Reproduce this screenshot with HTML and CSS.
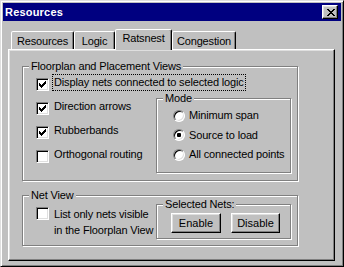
FILE: index.html
```html
<!DOCTYPE html>
<html>
<head>
<meta charset="utf-8">
<title>Resources</title>
<link rel="stylesheet" href="styles.css">
</head>
<body>
<div class="window">
  <div class="titlebar">
    <span class="title">Resources</span>
    <span class="close"><svg width="8" height="7" viewBox="0 0 8 7" shape-rendering="crispEdges"><path d="M0 0h2v1H0zM6 0h2v1H6zM1 1h2v1H1zM5 1h2v1H5zM2 2h4v1H2zM3 3h2v1H3zM2 4h4v1H2zM1 5h2v1H1zM5 5h2v1H5zM0 6h2v1H0zM6 6h2v1H6z" fill="#000"/></svg></span>
  </div>
  <div class="client">
    <div class="tabs">
      <div class="tab t-res">Resources</div>
      <div class="tab t-logic">Logic</div>
      <div class="tab t-rats active">Ratsnest</div>
      <div class="tab t-cong">Congestion</div>
    </div>
    <div class="panel">
      <div class="group g-views">
        <div class="group-title">Floorplan and Placement Views</div>
        <div class="row first">
          <span class="check"><svg width="7" height="7" viewBox="0 0 7 7" shape-rendering="crispEdges"><path d="M0 2h1v3H0zM1 3h1v3H1zM2 4h1v3H2zM3 3h1v3H3zM4 2h1v3H4zM5 1h1v3H5zM6 0h1v3H6z" fill="#000"/></svg></span>
          <span class="label focus">Display nets connected to selected logic</span>
        </div>
        <div class="split">
          <div class="col">
            <div class="row">
              <span class="check"><svg width="7" height="7" viewBox="0 0 7 7" shape-rendering="crispEdges"><path d="M0 2h1v3H0zM1 3h1v3H1zM2 4h1v3H2zM3 3h1v3H3zM4 2h1v3H4zM5 1h1v3H5zM6 0h1v3H6z" fill="#000"/></svg></span>
              <span class="label">Direction arrows</span>
            </div>
            <div class="row">
              <span class="check"><svg width="7" height="7" viewBox="0 0 7 7" shape-rendering="crispEdges"><path d="M0 2h1v3H0zM1 3h1v3H1zM2 4h1v3H2zM3 3h1v3H3zM4 2h1v3H4zM5 1h1v3H5zM6 0h1v3H6z" fill="#000"/></svg></span>
              <span class="label">Rubberbands</span>
            </div>
            <div class="row">
              <span class="check"></span>
              <span class="label">Orthogonal routing</span>
            </div>
          </div>
          <div class="group g-mode">
            <div class="group-title">Mode</div>
            <div class="radios">
              <div class="rrow"><span class="radio"></span><span class="rlabel">Minimum span</span></div>
              <div class="rrow"><span class="radio"><span class="dot"></span></span><span class="rlabel">Source to load</span></div>
              <div class="rrow"><span class="radio"></span><span class="rlabel">All connected points</span></div>
            </div>
          </div>
        </div>
      </div>
      <div class="group g-net">
        <div class="group-title">Net View</div>
        <div class="net">
          <div class="col">
            <div class="row multi">
              <span class="check"></span>
              <span class="label">List only nets visible<br>in the Floorplan View</span>
            </div>
          </div>
          <div class="group g-sel">
            <div class="group-title">Selected Nets:</div>
            <div class="buttons">
              <button class="btn b-enable">Enable</button>
              <button class="btn b-disable">Disable</button>
            </div>
          </div>
        </div>
      </div>
    </div>
  </div>
</div>
</body>
</html>
```
FILE: styles.css
```css
* { box-sizing: border-box; }
html, body { margin: 0; padding: 0; }
body {
  width: 344px;
  height: 267px;
  overflow: hidden;
  background: #c0c0c0;
  color: #000;
  font: 11px/15px "Liberation Sans", Arial, sans-serif;
  letter-spacing: -0.15px;
}
.window {
  width: 344px;
  height: 267px;
  padding: 2px;
  background: #c0c0c0;
  border: 1px solid;
  border-color: #dfdfdf #000 #000 #dfdfdf;
  box-shadow: inset 1px 1px #fff, inset -1px -1px #808080;
}
.titlebar {
  height: 18px;
  display: flex;
  align-items: flex-start;
  padding-left: 2px;
  background: #000080;
  color: #fff;
}
.title {
  font-weight: bold;
  line-height: 18px;
  letter-spacing: 0.2px;
}
.close {
  width: 16px;
  height: 14px;
  margin: 2px 3px 0 auto;
  padding: 3px 0 0 4px;
  display: flex;
  align-items: flex-start;
  background: #c0c0c0;
  border: 1px solid;
  border-color: #fff #000 #000 #fff;
  box-shadow: inset -1px -1px #808080, inset 1px 1px #dfdfdf;
}
.close svg { display: block; }
.client { padding: 8px 0 0 5px; }
.tabs {
  display: flex;
  align-items: flex-end;
  height: 20px;
  padding-left: 3px;
}
.tab {
  height: 18px;
  padding-top: 2px;
  text-align: center;
  line-height: 15px;
  white-space: nowrap;
  border: 1px solid;
  border-bottom: none;
  border-color: #fff #000 transparent #fff;
  border-radius: 2px 2px 0 0;
  box-shadow: inset -1px 0 #808080;
  background: #c0c0c0;
}
.tab.active {
  height: 21px;
  margin-bottom: -1px;
  padding-top: 1px;
  position: relative;
  z-index: 1;
}
.t-res { width: 63px; }
.t-logic { width: 41px; }
.t-rats { width: 57px; }
.t-cong { width: 64px; }
.panel {
  width: 327px;
  height: 212px;
  padding: 16px 0 0 13px;
  border: 1px solid;
  border-color: #fff #000 #000 #fff;
  box-shadow: inset -1px -1px #808080, inset 1px 1px #dfdfdf;
}
.group {
  border: 1px solid #808080;
  box-shadow: 1px 1px #fff, inset 1px 1px #fff;
}
.group-title {
  width: max-content;
  margin: -7px 0 0 6px;
  padding: 0 2px;
  line-height: 13px;
  background: #c0c0c0;
  white-space: nowrap;
}
.g-views { width: 276px; padding-bottom: 7px; }
.row {
  display: flex;
  align-items: flex-start;
  height: 24px;
  padding-left: 13px;
}
.row.first { margin-top: -1px; }
.check {
  flex: none;
  width: 13px;
  height: 13px;
  margin-top: 6px;
  padding: 2px;
  background: #fff;
  border: 1px solid;
  border-color: #808080 #fff #fff #808080;
  box-shadow: inset 1px 1px #000, inset -1px -1px #dfdfdf;
}
.check svg { display: block; }
.label {
  margin: 2px 0 0 3px;
  padding: 0 1px;
  line-height: 15px;
  white-space: nowrap;
  border: 1px dotted transparent;
}
.label.focus { border-color: #000; }
.split { display: flex; }
.col { width: 133px; flex: none; }
.g-mode {
  width: 135px;
  height: 75px;
  margin-top: 2px;
}
.radios { padding: 1px 0 0 16px; }
.rrow {
  display: flex;
  align-items: center;
  height: 19.5px;
  white-space: nowrap;
}
.radio {
  flex: none;
  width: 12px;
  height: 12px;
  margin-right: 4px;
  display: flex;
  align-items: center;
  justify-content: center;
  background: #fff;
  border: 1px solid;
  border-color: #808080 #fff #fff #808080;
  border-radius: 50%;
  box-shadow: inset 1px 1px #000, inset -1px -1px #dfdfdf;
}
.dot {
  width: 4px;
  height: 4px;
  border-radius: 1px;
  background: #000;
}
.rlabel { line-height: 15px; }
.g-net {
  width: 276px;
  margin-top: 14px;
  padding-bottom: 6px;
}
.net { display: flex; }
.row.multi { height: auto; }
.row.multi .check { margin-top: 5px; }
.row.multi .label { margin-top: 3px; line-height: 16px; }
.g-sel {
  width: 135px;
  margin-top: 2px;
}
.buttons {
  display: flex;
  gap: 10px;
  padding: 2px 0 3px 14px;
}
.btn {
  height: 20px;
  padding: 0;
  font: inherit;
  line-height: 16px;
  color: #000;
  background: #c0c0c0;
  border: 1px solid;
  border-color: #fff #000 #000 #fff;
  box-shadow: inset -1px -1px #808080, inset 1px 1px #dfdfdf;
}
.b-enable { width: 50px; }
.b-disable { width: 49px; }
```
